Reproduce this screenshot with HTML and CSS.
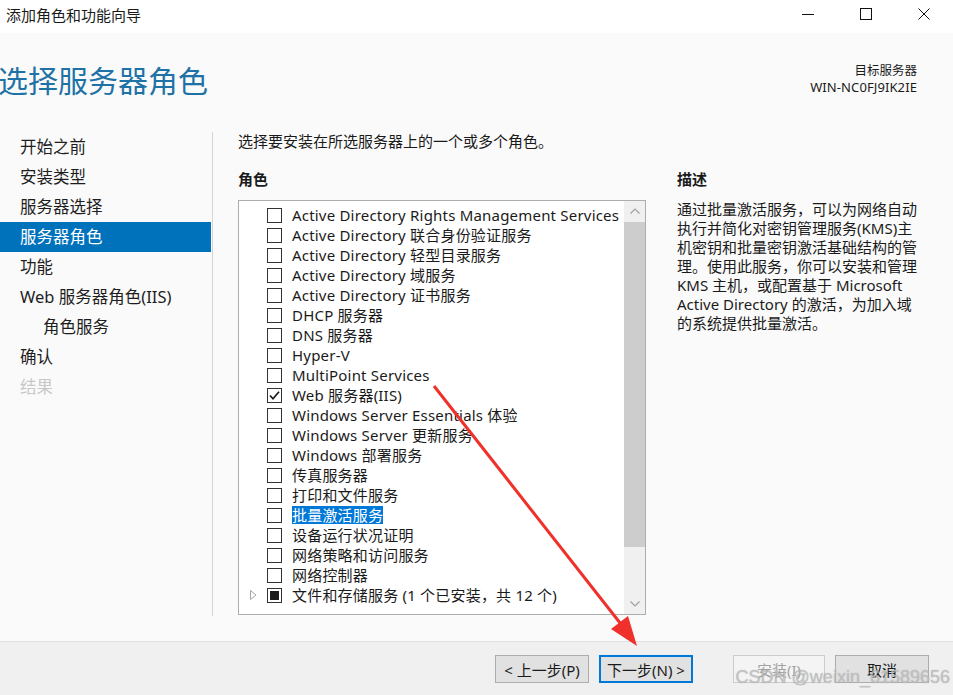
FILE: index.html
```
<!DOCTYPE html>
<html>
<head>
    <meta charset="UTF-8">
    <title>添加角色和功能向导</title>
    <link rel="stylesheet" href="styles.css">
</head>
<body>
<div class="window">
    <div class="titlebar">
        <span class="title">添加角色和功能向导</span>
        <div class="controls">
            <span class="ctl"><svg width="12" height="12" viewBox="0 0 12 12"><line x1="0" y1="6.5" x2="12" y2="6.5" stroke="#111" stroke-width="1"/></svg></span>
            <span class="ctl"><svg width="12" height="12" viewBox="0 0 12 12"><rect x="0.5" y="0.5" width="11" height="11" fill="none" stroke="#111" stroke-width="1"/></svg></span>
            <span class="ctl"><svg width="12" height="12" viewBox="0 0 12 12"><path d="M0.5 0.5 L11.5 11.5 M11.5 0.5 L0.5 11.5" stroke="#111" stroke-width="1"/></svg></span>
        </div>
    </div>

    <div class="page">
        <div class="header">
            <h1>选择服务器角色</h1>
            <div class="target">
                <div>目标服务器</div>
                <div class="host">WIN-NC0FJ9IK2IE</div>
            </div>
        </div>

        <div class="main">
            <ul class="steps">
                <li>开始之前</li>
                <li>安装类型</li>
                <li>服务器选择</li>
                <li class="active">服务器角色</li>
                <li>功能</li>
                <li>Web 服务器角色(IIS)</li>
                <li class="sub">角色服务</li>
                <li>确认</li>
                <li class="disabled">结果</li>
            </ul>

            <div class="content">
                <p class="intro">选择要安装在所选服务器上的一个或多个角色。</p>
                <div class="columns">
                    <div class="roles">
                        <h3>角色</h3>
                        <div class="listbox">
                            <ul class="rolelist">
                                <li><span class="exp"></span><span class="cb"></span><span class="lbl">Active Directory Rights Management Services</span></li>
                                <li><span class="exp"></span><span class="cb"></span><span class="lbl">Active Directory 联合身份验证服务</span></li>
                                <li><span class="exp"></span><span class="cb"></span><span class="lbl">Active Directory 轻型目录服务</span></li>
                                <li><span class="exp"></span><span class="cb"></span><span class="lbl">Active Directory 域服务</span></li>
                                <li><span class="exp"></span><span class="cb"></span><span class="lbl">Active Directory 证书服务</span></li>
                                <li><span class="exp"></span><span class="cb"></span><span class="lbl">DHCP 服务器</span></li>
                                <li><span class="exp"></span><span class="cb"></span><span class="lbl">DNS 服务器</span></li>
                                <li><span class="exp"></span><span class="cb"></span><span class="lbl">Hyper-V</span></li>
                                <li><span class="exp"></span><span class="cb"></span><span class="lbl">MultiPoint Services</span></li>
                                <li><span class="exp"></span><span class="cb"><svg width="13" height="13" viewBox="0 0 13 13"><path d="M2 6.5 L5 9.8 L11 2.8" fill="none" stroke="#1a1a1a" stroke-width="1.7"/></svg></span><span class="lbl">Web 服务器(IIS)</span></li>
                                <li><span class="exp"></span><span class="cb"></span><span class="lbl">Windows Server Essentials 体验</span></li>
                                <li><span class="exp"></span><span class="cb"></span><span class="lbl">Windows Server 更新服务</span></li>
                                <li><span class="exp"></span><span class="cb"></span><span class="lbl">Windows 部署服务</span></li>
                                <li><span class="exp"></span><span class="cb"></span><span class="lbl">传真服务器</span></li>
                                <li><span class="exp"></span><span class="cb"></span><span class="lbl">打印和文件服务</span></li>
                                <li><span class="exp"></span><span class="cb"></span><span class="lbl sel">批量激活服务</span></li>
                                <li><span class="exp"></span><span class="cb"></span><span class="lbl">设备运行状况证明</span></li>
                                <li><span class="exp"></span><span class="cb"></span><span class="lbl">网络策略和访问服务</span></li>
                                <li><span class="exp"></span><span class="cb"></span><span class="lbl">网络控制器</span></li>
                                <li><span class="exp"><svg width="7" height="10" viewBox="0 0 7 10"><path d="M0.5 0.5 L6 5 L0.5 9.5 Z" fill="none" stroke="#a6a6a6" stroke-width="1"/></svg></span><span class="cb part"><span class="fill"></span></span><span class="lbl">文件和存储服务 (1 个已安装，共 12 个)</span></li>
                            </ul>
                            <div class="scrollbar">
                                <div class="sb-btn"><svg width="10" height="6" viewBox="0 0 10 6"><path d="M0.5 5.5 L5 1 L9.5 5.5" fill="none" stroke="#a0a0a0" stroke-width="1.2"/></svg></div>
                                <div class="sb-thumb"></div>
                                <div class="sb-track"></div>
                                <div class="sb-btn"><svg width="10" height="6" viewBox="0 0 10 6"><path d="M0.5 0.5 L5 5 L9.5 0.5" fill="none" stroke="#a0a0a0" stroke-width="1.2"/></svg></div>
                            </div>
                        </div>
                    </div>
                    <div class="desc">
                        <h3>描述</h3>
                        <p>通过批量激活服务，可以为网络自动<br>执行并简化对密钥管理服务(KMS)主<br>机密钥和批量密钥激活基础结构的管<br>理。使用此服务，你可以安装和管理<br>KMS 主机，或配置基于 Microsoft<br>Active Directory 的激活，为加入域<br>的系统提供批量激活。</p>
                    </div>
                </div>
            </div>
        </div>
    </div>

    <div class="footer">
        <button class="btn">&lt; 上一步(P)</button>
        <button class="btn primary">下一步(N) &gt;</button>
        <button class="btn off">安装(I)</button>
        <button class="btn">取消</button>
    </div>

    <!-- screenshot annotation -->
    <svg class="arrow" width="953" height="695" viewBox="0 0 953 695">
        <line x1="434" y1="386" x2="624" y2="628" stroke="#f0302a" stroke-width="3"/>
        <polygon points="637,646 628,616 611,629" fill="#f0302a"/>
    </svg>
    <div class="watermark">CSDN @weixin_61589656</div>
</div>
</body>
</html>
```

FILE: styles.css
```
* {
    box-sizing: border-box;
}

body {
    margin: 0;
    font-family: "Noto Sans", "Noto Sans CJK SC", sans-serif;
    color: #1a1a1a;
    background: #fafafa;
}

.window {
    position: relative;
    width: 953px;
    height: 695px;
    overflow: hidden;
    display: flex;
    flex-direction: column;
}

/* title bar */
.titlebar {
    height: 33px;
    background: #fff;
    display: flex;
    align-items: center;
}

.title {
    padding-left: 6px;
    font-size: 15px;
    margin-top: -5px;
}

.controls {
    margin-left: auto;
    display: flex;
    align-self: stretch;
}

.ctl {
    width: 58px;
    display: flex;
    justify-content: center;
    padding-top: 8px;
}

/* page body */
.page {
    flex: 1;
    background: #fafafa;
}

.header {
    height: 99px;
    display: flex;
    justify-content: space-between;
    padding-top: 28px;
}

.header h1 {
    margin: 0 0 0 -2px;
    font-size: 30px;
    font-weight: normal;
    line-height: 40px;
    color: #1f72a6;
}

.target {
    padding-right: 36px;
    padding-top: 2px;
    text-align: right;
    font-size: 12.5px;
    line-height: 16px;
}

.target .host {
    font-size: 13px;
    letter-spacing: 0.1px;
}

.main {
    display: flex;
    height: 484px;
}

.steps {
    list-style: none;
    margin: 0;
    padding: 0;
    width: 211px;
    margin-right: 1px;
}

.steps li {
    height: 30px;
    line-height: 30px;
    padding-left: 20px;
    font-size: 16.5px;
    color: #1e1e1e;
}

.steps li.sub {
    padding-left: 43px;
}

.steps li.active {
    background: #0072bc;
    color: #fff;
}

.steps li.disabled {
    color: #c8c8c8;
}

.content {
    flex: 1;
    border-left: 1px solid #d4d4d4;
    padding-left: 25px;
}

.intro {
    margin: 0;
    font-size: 15px;
    line-height: 18px;
}

.columns {
    display: flex;
    gap: 31px;
    margin-top: 19px;
}

.roles {
    width: 408px;
}

.columns h3 {
    margin: 0;
    font-size: 15px;
    line-height: 20px;
    font-weight: bold;
}

/* role list box */
.listbox {
    margin-top: 11px;
    height: 415px;
    border: 1px solid #adadad;
    background: #fff;
    display: flex;
}

.rolelist {
    flex: 1;
    list-style: none;
    margin: 0;
    padding: 4px 0 0 0;
}

.rolelist li {
    height: 20px;
    display: flex;
    align-items: center;
    padding-left: 8px;
    font-size: 15px;
    white-space: nowrap;
}

.exp {
    width: 12px;
    display: flex;
    justify-content: center;
}

.cb {
    width: 15px;
    height: 15px;
    margin-left: 8px;
    border: 1px solid #333;
    display: flex;
    align-items: center;
    justify-content: center;
}

.cb.part .fill {
    width: 9px;
    height: 9px;
    background: #1a1a1a;
}

.lbl {
    margin-left: 10px;
    line-height: 18px;
    letter-spacing: 0.2px;
}

.lbl.sel {
    background: #0078d7;
    color: #fff;
}

.scrollbar {
    width: 21px;
    background: #f0f0f0;
    display: flex;
    flex-direction: column;
}

.sb-btn {
    height: 20px;
    display: flex;
    align-items: center;
    justify-content: center;
}

.sb-thumb {
    margin-top: 1px;
    height: 325px;
    background: #cdcdcd;
}

.sb-track {
    flex: 1;
}

.desc {
    width: 250px;
}

.desc p {
    margin: 11px 0 0 0;
    font-size: 15px;
    line-height: 19px;
}

/* footer */
.footer {
    height: 54px;
    background: #f0f0f0;
    border-top: 1px solid #dfdfdf;
    display: flex;
    justify-content: flex-end;
    align-items: flex-start;
    padding: 13px 24px 0 0;
}

.btn {
    width: 94px;
    height: 28px;
    margin-left: 10px;
    background: #e1e1e1;
    border: 1px solid #adadad;
    font-family: inherit;
    font-size: 15px;
    color: #1a1a1a;
    padding: 0;
}

.btn.primary {
    border: 1px solid #0078d7;
    box-shadow: inset 0 0 0 1px #0078d7;
}

.btn.off {
    margin-left: 40px;
    width: 92px;
    background: #f4f4f4;
    border-color: #cccccc;
    color: #a3a3a3;
}

/* annotation overlays */
.arrow {
    position: absolute;
    left: 0;
    top: 0;
    pointer-events: none;
}

.watermark {
    position: absolute;
    right: 3px;
    bottom: 7px;
    font-family: "Liberation Sans", sans-serif;
    font-size: 18px;
    color: rgba(200, 200, 200, 0.75);
    text-shadow: 0 0 1px rgba(120, 120, 120, 0.6);
}
```
